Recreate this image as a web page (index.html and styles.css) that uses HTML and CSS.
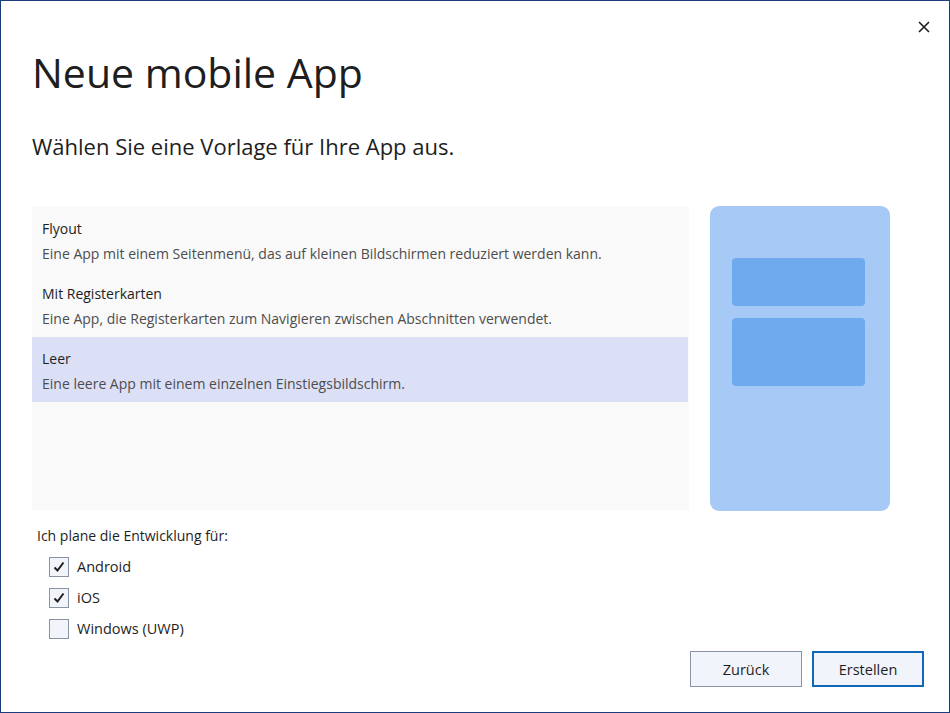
FILE: index.html
```html
<!DOCTYPE html>
<html lang="de">
<head>
<meta charset="utf-8">
<title>Neue mobile App</title>
<link rel="stylesheet" href="styles.css">
</head>
<body>
<div class="window">
  <button class="close" aria-label="Schließen">
    <svg width="12" height="12" viewBox="0 0 12 12"><path d="M1 1 L11 11 M11 1 L1 11" stroke="#1e1e1e" stroke-width="1.6" fill="none"/></svg>
  </button>
  <h1 class="title">Neue mobile App</h1>
  <h2 class="subtitle">Wählen Sie eine Vorlage für Ihre App aus.</h2>
  <div class="content">
    <div class="templates">
      <div class="item">
        <div class="item-title">Flyout</div>
        <div class="item-desc">Eine App mit einem Seitenmenü, das auf kleinen Bildschirmen reduziert werden kann.</div>
      </div>
      <div class="item">
        <div class="item-title">Mit Registerkarten</div>
        <div class="item-desc">Eine App, die Registerkarten zum Navigieren zwischen Abschnitten verwendet.</div>
      </div>
      <div class="item selected">
        <div class="item-title">Leer</div>
        <div class="item-desc">Eine leere App mit einem einzelnen Einstiegsbildschirm.</div>
      </div>
    </div>
    <div class="preview">
      <div class="block block-small"></div>
      <div class="block block-large"></div>
    </div>
  </div>
  <div class="platforms">
    <div class="platforms-label">Ich plane die Entwicklung für:</div>
    <div class="check-row">
      <span class="box"><svg width="14" height="14" viewBox="0 0 14 14"><path d="M2.5 7.5 L5.5 10.5 L11.5 2.5" stroke="#1e1e1e" stroke-width="2" fill="none"/></svg></span>
      <span class="check-label">Android</span>
    </div>
    <div class="check-row">
      <span class="box"><svg width="14" height="14" viewBox="0 0 14 14"><path d="M2.5 7.5 L5.5 10.5 L11.5 2.5" stroke="#1e1e1e" stroke-width="2" fill="none"/></svg></span>
      <span class="check-label">iOS</span>
    </div>
    <div class="check-row">
      <span class="box"></span>
      <span class="check-label">Windows (UWP)</span>
    </div>
  </div>
  <div class="actions">
    <button class="btn">Zurück</button>
    <button class="btn btn-primary">Erstellen</button>
  </div>
</div>
</body>
</html>
```
FILE: styles.css
```css
* { box-sizing: border-box; }
html, body { margin: 0; padding: 0; background: #ffffff; }
body { font-family: "Open Sans", "Noto Sans", sans-serif; color: #1e1e1e; }

.window {
  position: relative;
  width: 950px;
  height: 713px;
  border: 1px solid #1d3c7b;
  padding: 0 25px 0 31px;
  background: #ffffff;
  display: flex;
  flex-direction: column;
}

.close {
  position: absolute;
  top: 19px;
  right: 18px;
  width: 14px;
  height: 14px;
  padding: 0;
  border: 0;
  background: transparent;
  display: flex;
  align-items: center;
  justify-content: center;
}

.title {
  margin: 43px 0 0 0;
  font-size: 41px;
  line-height: 56px;
  font-weight: 400;
  color: #1e1e1e;
}

.subtitle {
  margin: 31px 0 0 0;
  font-size: 22px;
  line-height: 30px;
  font-weight: 400;
  color: #1e1e1e;
}

.content {
  margin-top: 45px;
  display: flex;
  gap: 21px;
  height: 305px;
}

.templates {
  width: 657px;
  height: 304px;
  background: #f9f9f9;
  padding-top: 1px;
}

.item {
  padding: 9px 10px 6px 10px;
  height: 65px;
}
.item.selected { background: #dbe0f7; margin-right: 1px; }

.item-title {
  font-size: 14px;
  line-height: 25px;
  color: #1e1e1e;
}
.item-desc {
  font-size: 14px;
  line-height: 25px;
  color: #4d4d4d;
}

.preview {
  width: 180px;
  height: 305px;
  background: #a7c9f5;
  border-radius: 9px;
  padding: 52px 25px 0 22px;
  display: flex;
  flex-direction: column;
  gap: 12px;
}
.block {
  background: #6faaee;
  border-radius: 4px;
}
.block-small { height: 48px; }
.block-large { height: 68px; }

.platforms {
  margin-top: 15px;
  padding-left: 5px;
  display: flex;
  flex-direction: column;
  gap: 11px;
}
.platforms-label {
  font-size: 14px;
  line-height: 20px;
  color: #1e1e1e;
}
.check-row {
  display: flex;
  align-items: center;
  gap: 8px;
  padding-left: 12px;
  height: 20px;
}
.box {
  width: 20px;
  height: 20px;
  border: 1px solid #8a93a6;
  background: #f2f4fb;
  display: flex;
  align-items: center;
  justify-content: center;
}
.check-label {
  font-size: 14.5px;
  line-height: 20px;
  color: #1e1e1e;
}

.actions {
  margin-top: 12px;
  display: flex;
  justify-content: flex-end;
  gap: 10px;
}
.btn {
  width: 112px;
  height: 36px;
  font-family: "Open Sans", "Noto Sans", sans-serif;
  font-size: 14.5px;
  color: #1e1e1e;
  background: #f1f4fb;
  border: 1px solid #8a93a6;
  padding: 0;
}
.btn-primary {
  border: 2px solid #1167b9;
}
```
